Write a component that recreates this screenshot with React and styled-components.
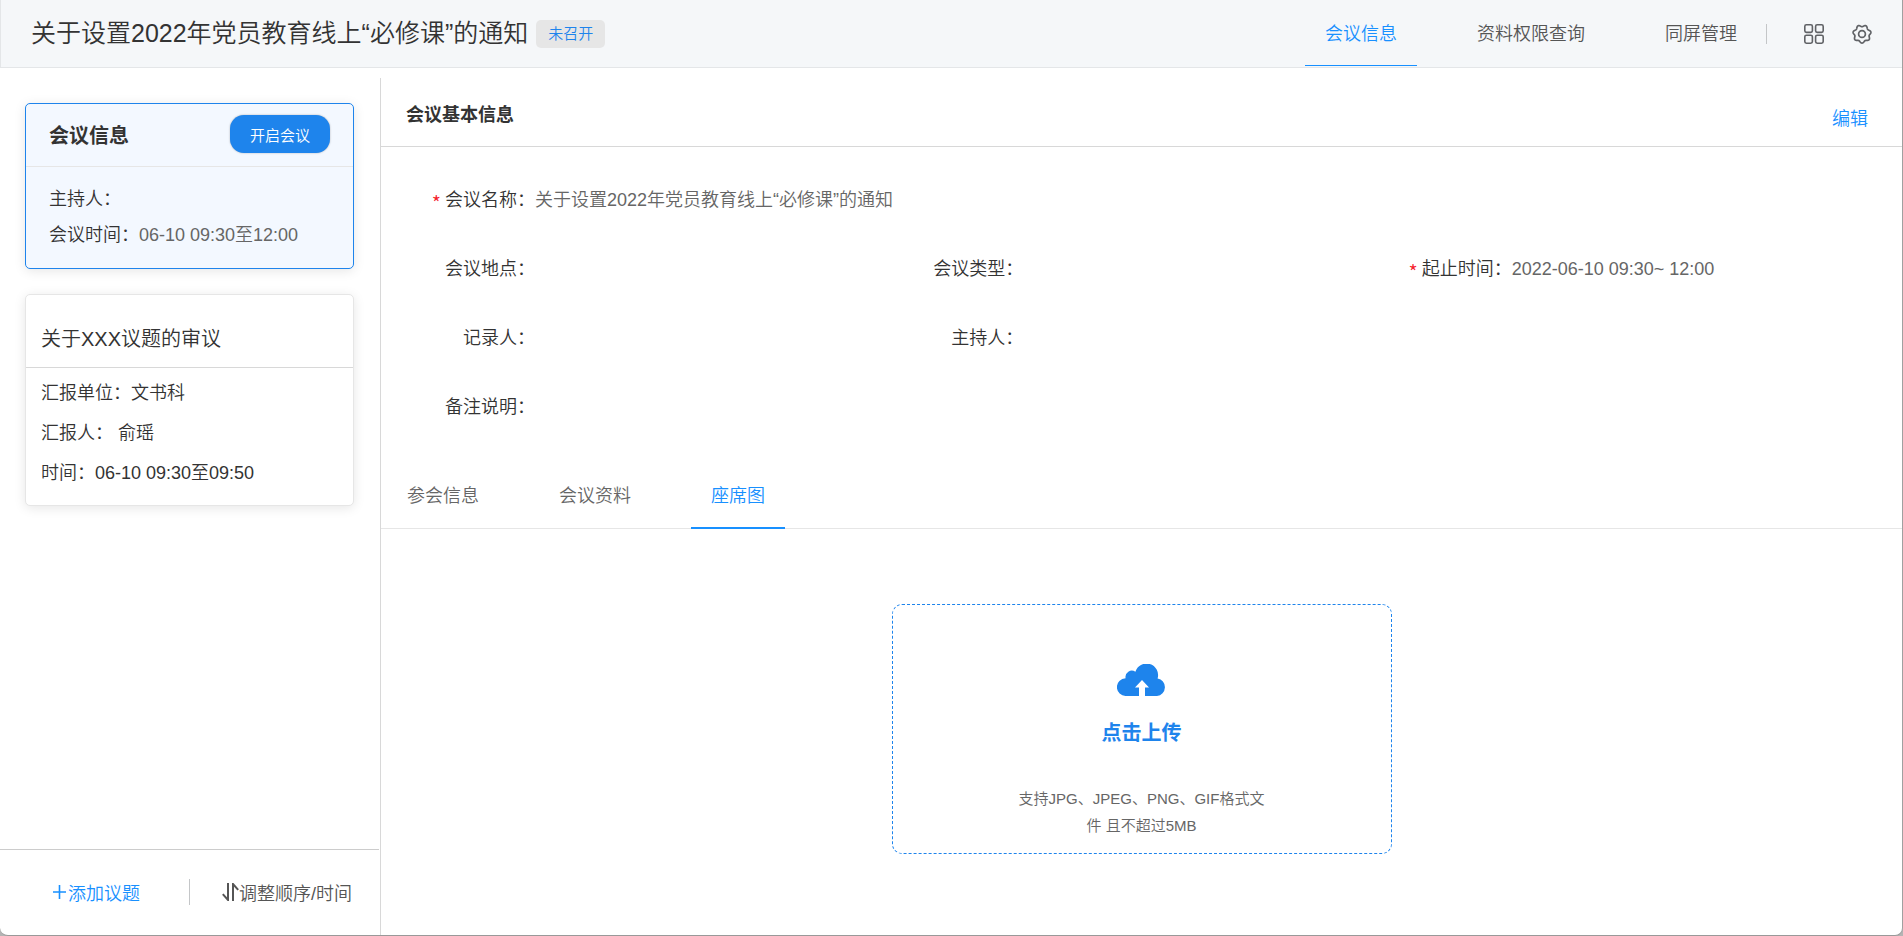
import React from 'react'
import styled, { createGlobalStyle, css } from 'styled-components'

const GlobalStyle = createGlobalStyle`
  * {
    box-sizing: border-box;
  }

  body {
    margin: 0;
    background-color: #b4b4b4;
    color: #333;
    font-family: "Liberation Sans", "Noto Sans CJK SC", sans-serif;
    font-size: 18px;
    font-weight: 350;
  }

  h1, h2, p, dl, dd {
    margin: 0;
  }

  button {
    padding: 0;
    border: none;
    background: none;
    color: inherit;
    font: inherit;
    cursor: pointer;
  }

  a {
    color: inherit;
    text-decoration: none;
  }

  svg {
    display: block;
    flex: none;
  }
`

const PageSt = styled.div`
  display: flex;
  flex-direction: column;
  min-height: 100vh;
  background-color: #fff;
  border-right: 1px solid #a0a0a0;
  border-bottom: 1px solid #999;
  border-radius: 0 0 8px 8px;
`

const HeaderSt = styled.header`
  display: flex;
  align-items: center;
  height: 68px;
  padding: 0 30px;
  background-color: #f5f7f9;
  border-left: 1px solid #e4e6e8;
  border-bottom: 1px solid #e4e6e8;
`

const PageTitleSt = styled.h1`
  padding-bottom: 2px;
  font-size: 25px;
  line-height: 36px;
  font-weight: 350;
`

const StatusSt = styled.span`
  margin-left: 8px;
  padding: 0 12px;
  border-radius: 5px;
  background-color: #e6e6e6;
  color: #1e84ec;
  font-size: 15px;
  line-height: 28px;
`

const NavSt = styled.nav`
  display: flex;
  align-self: flex-start;
  gap: 40px;
  margin-left: auto;
`

const NavLinkSt = styled.a`
  padding: 3px 20px 0;
  border-bottom: 1px solid transparent;
  color: #555;
  line-height: 62px;

  ${({ $active }) => $active && css`
    border-color: #1890ff;
    color: #1890ff;
  `}
`

const DividerSt = styled.span`
  width: 1px;
  height: ${({ $height }) => $height}px;
  background-color: #c4c6c8;
`

const HeaderToolsSt = styled.div`
  display: flex;
  align-items: center;
  gap: 28px;
  margin-left: 9px;
  color: #606266;

  ${DividerSt} {
    margin-right: 9px;
  }
`

const BodySt = styled.div`
  display: flex;
  flex: 1;
  padding-top: 10px;
`

const SidebarSt = styled.aside`
  display: flex;
  flex-direction: column;
  flex: none;
  width: 380px;
`

const CardListSt = styled.div`
  display: flex;
  flex: 1;
  flex-direction: column;
  gap: 25px;
  padding: 25px 26px 25px 25px;
`

const CardSt = styled.section`
  border: 1px solid ${({ $active }) => ($active ? '#1e84ec' : '#e6e6e6')};
  border-radius: 5px;
  background-color: ${({ $active }) => ($active ? '#f3f8ff' : '#fff')};
  box-shadow: 0 2px 12px rgba(0, 0, 0, 0.1);
`

const MeetingHeadSt = styled.div`
  display: flex;
  align-items: center;
  justify-content: space-between;
  height: 63px;
  padding: 0 23px 2px;
  border-bottom: 1px solid #e6e6e6;
`

const MeetingTitleSt = styled.h2`
  font-size: 20px;
  font-weight: 700;
`

const StartButtonSt = styled.button`
  && {
    height: 38px;
    padding: 0 20px;
    border-radius: 14px;
    background-color: #1e84ec;
    box-shadow: 0 0 2px rgba(0, 0, 0, 0.3);
    color: #fff;
    font-size: 15px;
  }
`

const MeetingBodySt = styled.div`
  padding: 14px 23px 15px;
  line-height: 36px;
`

const ValueSt = styled.span`
  color: #666;
`

const TopicTitleSt = styled.h2`
  padding: 30px 15px 14px;
  border-bottom: 1px solid #d8d8d8;
  font-size: 20px;
  font-weight: 350;
  line-height: 28px;
`

const TopicBodySt = styled.div`
  padding: 5px 15px 12px;
  line-height: 40px;
`

const SidebarFootSt = styled.footer`
  display: flex;
  align-items: center;
  height: 86px;
  margin-right: 1px;
  padding: 0 0 2px 52px;
  border-top: 1px solid #ccc;

  ${DividerSt} {
    margin: 0 32px 0 49px;
  }
`

const FootButtonSt = styled.button`
  && {
    display: flex;
    align-items: center;
    color: ${({ $primary }) => ($primary ? '#1890ff' : '#555')};
  }
`

const MainSt = styled.main`
  flex: 1;
  min-width: 0;
  border-left: 1px solid #d8d8d8;
`

const SectionHeadSt = styled.div`
  display: flex;
  align-items: center;
  justify-content: space-between;
  height: 69px;
  padding: 2px 34px 0 25px;
  border-bottom: 1px solid #d8d8d8;
`

const SectionTitleSt = styled.h2`
  font-size: 18px;
  font-weight: 700;
`

const EditButtonSt = styled.button`
  && {
    padding-top: 8px;
    color: #1890ff;
  }
`

const FormSt = styled.dl`
  display: grid;
  grid-template-columns: repeat(3, 1fr);
  grid-auto-rows: 69px;
  padding: 19px 28px 23px;
  line-height: 69px;
`

const FieldSt = styled.div`
  display: flex;
  grid-column: ${({ $wide }) => ($wide ? '1 / -1' : 'auto')};

  dt {
    flex: none;
    width: 126px;
    text-align: right;
    white-space: nowrap;
  }

  dd {
    color: #666;
  }
`

const RequiredSt = styled.span`
  margin-right: 4px;
  color: #f5222d;
  font-family: "Noto Sans CJK SC", sans-serif;
  font-size: 20px;
  line-height: 1;
  vertical-align: sub;
`

const BlankSt = styled.div``

const TabsSt = styled.div`
  display: flex;
  gap: 40px;
  padding-left: 6px;
  border-bottom: 1px solid #e6e6e6;
`

const TabSt = styled.button`
  && {
    height: 64px;
    margin-bottom: -1px;
    padding: 0 20px 4px;
    border-bottom: 2px solid ${({ $active }) => ($active ? '#1890ff' : 'transparent')};
    color: ${({ $active }) => ($active ? '#1890ff' : '#666')};
  }
`

const UploadSt = styled.label`
  display: flex;
  flex-direction: column;
  align-items: center;
  width: 500px;
  height: 250px;
  margin: 75px auto 0;
  padding-top: 59px;
  border: 1px dashed #1e84ec;
  border-radius: 10px;
  cursor: pointer;

  input {
    position: absolute;
    width: 1px;
    height: 1px;
    opacity: 0;
  }
`

const UploadTitleSt = styled.span`
  margin-top: 23px;
  color: #1e84ec;
  font-size: 20px;
  font-weight: 700;
  line-height: 28px;
`

const UploadHintSt = styled.span`
  width: 250px;
  margin-top: 38px;
  color: #666;
  font-size: 15px;
  line-height: 27px;
  text-align: center;
`

const GridIcon = () => (
  <svg width="20" height="20" viewBox="0 0 20 20" fill="none" stroke="currentColor" strokeWidth="1.6">
    <rect x="0.8" y="0.8" width="7.6" height="7.6" rx="1.6" />
    <rect x="11.6" y="0.8" width="7.6" height="7.6" rx="1.6" />
    <rect x="0.8" y="11.2" width="7.6" height="8" rx="1.6" />
    <rect x="11.6" y="11.2" width="7.6" height="8" rx="1.6" />
  </svg>
)

// outline of a gear with seven soft teeth, one of them pointing down
const gearPoints = Array.from({ length: 112 }, (_, i) => {
  const angle = (i / 112) * Math.PI * 2
  const radius = 8.2 + 0.9 * Math.cos(7 * (angle - Math.PI / 2))
  return `${(10 + radius * Math.cos(angle)).toFixed(2)},${(10 + radius * Math.sin(angle)).toFixed(2)}`
}).join(' ')

const GearIcon = () => (
  <svg width="20" height="20" viewBox="0 0 20 20" fill="none" stroke="currentColor" strokeWidth="1.7" strokeLinejoin="round">
    <polygon points={gearPoints} />
    <circle cx="10" cy="10" r="3.4" />
  </svg>
)

const PlusIcon = () => (
  <svg width="16" height="16" viewBox="0 0 16 16" stroke="currentColor" strokeWidth="1.6">
    <path d="M1 8H14M7.5 1V15" />
  </svg>
)

const SortIcon = () => (
  <svg width="17" height="18" viewBox="0 0 17 18" fill="none" stroke="currentColor" strokeWidth="2">
    <path d="M6 0V17L0.8 11.2M11 18V1L16.2 6.8" />
  </svg>
)

const CloudIcon = () => (
  <svg width="49" height="32" viewBox="0 0 49 32">
    <path
      fill="#1e84ec"
      d="M9 32A8.9 8.9 0 0 1 8.6 14.2A6.3 6.3 0 0 1 18.4 7.8A11.2 11.2 0 0 1 40.6 14.4A8.9 8.9 0 0 1 40 32Z"
    />
    <path fill="#fff" d="M25 16L32 23.5H28V32H22V23.5H18Z" />
  </svg>
)

const fields = [
  { label: '会议名称', value: '关于设置2022年党员教育线上“必修课”的通知', required: true, wide: true },
  { label: '会议地点' },
  { label: '会议类型' },
  { label: '起止时间', value: '2022-06-10 09:30~ 12:00', required: true },
  { label: '记录人' },
  { label: '主持人' },
  null,
  { label: '备注说明', wide: true },
]

const tabs = ['参会信息', '会议资料', '座席图']

const navs = ['会议信息', '资料权限查询', '同屏管理']

function Header() {
  return (
    <HeaderSt>
      <PageTitleSt>关于设置2022年党员教育线上“必修课”的通知</PageTitleSt>
      <StatusSt>未召开</StatusSt>
      <NavSt>
        {navs.map((nav, i) => (
          <NavLinkSt key={nav} href="#" $active={i === 0}>{nav}</NavLinkSt>
        ))}
      </NavSt>
      <HeaderToolsSt>
        <DividerSt $height={20} />
        <button type="button" aria-label="应用"><GridIcon /></button>
        <button type="button" aria-label="设置"><GearIcon /></button>
      </HeaderToolsSt>
    </HeaderSt>
  )
}

function Sidebar() {
  return (
    <SidebarSt>
      <CardListSt>
        <CardSt $active>
          <MeetingHeadSt>
            <MeetingTitleSt>会议信息</MeetingTitleSt>
            <StartButtonSt type="button">开启会议</StartButtonSt>
          </MeetingHeadSt>
          <MeetingBodySt>
            <p>主持人：</p>
            <p>会议时间：<ValueSt>06-10 09:30至12:00</ValueSt></p>
          </MeetingBodySt>
        </CardSt>

        <CardSt>
          <TopicTitleSt>关于XXX议题的审议</TopicTitleSt>
          <TopicBodySt>
            <p>汇报单位：文书科</p>
            <p>汇报人： 俞瑶</p>
            <p>时间：06-10 09:30至09:50</p>
          </TopicBodySt>
        </CardSt>
      </CardListSt>

      <SidebarFootSt>
        <FootButtonSt type="button" $primary><PlusIcon />添加议题</FootButtonSt>
        <DividerSt $height={26} />
        <FootButtonSt type="button"><SortIcon />调整顺序/时间</FootButtonSt>
      </SidebarFootSt>
    </SidebarSt>
  )
}

export default function App() {
  return (
    <PageSt>
      <GlobalStyle />
      <Header />
      <BodySt>
        <Sidebar />
        <MainSt>
          <SectionHeadSt>
            <SectionTitleSt>会议基本信息</SectionTitleSt>
            <EditButtonSt type="button">编辑</EditButtonSt>
          </SectionHeadSt>

          <FormSt>
            {fields.map((field, i) => (
              field ? (
                <FieldSt key={field.label} $wide={field.wide}>
                  <dt>{field.required && <RequiredSt>*</RequiredSt>}{field.label}：</dt>
                  <dd>{field.value}</dd>
                </FieldSt>
              ) : <BlankSt key={i} />
            ))}
          </FormSt>

          <TabsSt>
            {tabs.map((tab, i) => (
              <TabSt key={tab} type="button" $active={i === 2}>{tab}</TabSt>
            ))}
          </TabsSt>

          <UploadSt>
            <input type="file" accept="image/*" />
            <CloudIcon />
            <UploadTitleSt>点击上传</UploadTitleSt>
            <UploadHintSt>支持JPG、JPEG、PNG、GIF格式文件 且不超过5MB</UploadHintSt>
          </UploadSt>
        </MainSt>
      </BodySt>
    </PageSt>
  )
}
